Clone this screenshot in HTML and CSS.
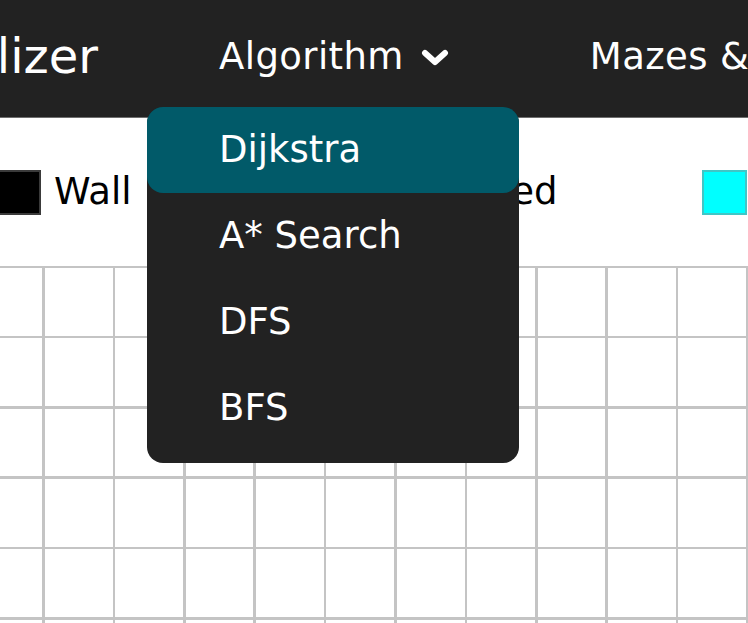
FILE: index.html
```html
<!DOCTYPE html>
<html lang="en">
<head>
<meta charset="utf-8">
<title>Pathfinding Visualizer</title>
<link rel="stylesheet" href="styles.css">
</head>
<body>
<nav class="nav">
  <div class="brand"><span>Pathfinding Visualizer</span></div>
  <div class="nav-item dropdown-host">
    <span>Algorithm</span>
    <svg class="chev" width="28" height="18" viewBox="0 0 28 18"><polyline points="4,4 14,13 24,4" fill="none" stroke="#fff" stroke-width="6" stroke-linecap="round" stroke-linejoin="round"/></svg>
    <ul class="dropdown">
      <li class="dd-item active">Dijkstra</li>
      <li class="dd-item">A* Search</li>
      <li class="dd-item">DFS</li>
      <li class="dd-item">BFS</li>
    </ul>
  </div>
  <div class="nav-item mazes"><span>Mazes &amp; Patterns</span></div>
</nav>
<section class="legend">
  <div class="legend-item wall-item"><span class="swatch wall"></span><span class="label">Wall</span></div>
  <div class="legend-item"><span class="swatch unvisited"></span><span class="label wide">Unvisited</span></div>
  <div class="legend-item"><span class="swatch visited"></span><span class="label">Visited</span></div>
</section>
<div class="board" id="board"></div>
<script src="app.js"></script>
</body>
</html>
```
FILE: styles.css
```css
html, body {
  margin: 0;
  padding: 0;
}
body {
  width: 748px;
  height: 623px;
  overflow: hidden;
  background: #fff;
  font-family: "DejaVu Sans", "Open Sans", sans-serif;
}
.nav {
  height: 117px;
  background: #222222;
  border-bottom: 1px solid #6e6e6e;
  display: flex;
  align-items: center;
  color: #fff;
  position: relative;
  z-index: 2;
}
.brand {
  width: 98px;
  flex: 0 0 98px;
  display: flex;
  justify-content: flex-end;
  white-space: nowrap;
  font-size: 48px;
  margin-top: -6px;
}
.nav-item {
  font-size: 37px;
  white-space: nowrap;
  display: flex;
  align-items: center;
  margin-top: -5px;
}
.dropdown-host {
  margin-left: 121px;
  position: relative;
}
.nav-item span {
  letter-spacing: 0.4px;
}
.chev {
  margin-left: 17px;
  margin-top: 4px;
}
.mazes {
  margin-left: 141px;
}
.dropdown {
  position: absolute;
  left: -72px;
  top: 72px;
  width: 372px;
  margin: 0;
  padding: 0 0 12px 0;
  list-style: none;
  background: #222222;
  border-radius: 16px;
}
.dd-item {
  height: 86px;
  line-height: 86px;
  padding-left: 72px;
  font-size: 37px;
  color: #fff;
  border-radius: 16px;
}
.dd-item.active {
  background: #015a69;
}
.legend {
  height: 148px;
  display: flex;
  align-items: center;
  gap: 145px;
  font-size: 37px;
  color: #000;
}
.legend-item {
  display: flex;
  align-items: center;
  gap: 13px;
  white-space: nowrap;
}
.wall-item {
  margin-left: -4px;
  margin-right: 4px;
}
.swatch {
  width: 41px;
  height: 41px;
  border: 2px solid #3a3a3a;
  flex: 0 0 auto;
}
.swatch.wall { background: #000; }
.swatch.unvisited { background: #fff; border-color: #c6c6c6; }
.swatch.visited { background: #00ffff; border-color: #40c6c6; }
.label { line-height: 1; margin-top: -1px; }
.label.wide { width: 219px; text-align: right; }
.board {
  margin-left: -28.1px;
  width: 900px;
  display: grid;
  grid-template-columns: repeat(12, 67.9px);
  grid-auto-rows: 67.9px;
  gap: 2.5px;
  padding: 1.8px 2.5px 2.5px 2.5px;
  background: #c4c4c4;
}
.cell {
  background: #fff;
}
```
FILE: app.js
```js
const board = document.getElementById('board');
for (let i = 0; i < 12 * 6; i++) {
  const c = document.createElement('div');
  c.className = 'cell';
  board.appendChild(c);
}
```
